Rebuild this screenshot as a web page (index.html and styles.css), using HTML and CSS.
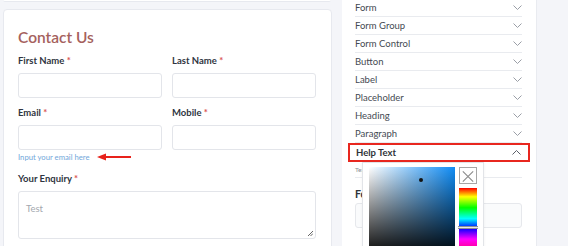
FILE: index.html
```html
<!DOCTYPE html>
<html>
<head>
<meta charset="utf-8">
<link rel="stylesheet" href="styles.css">
</head>
<body>
<div class="page">
  <div class="left">
    <div class="prev-card"></div>
    <div class="card">
      <h1 class="title">Contact Us</h1>
      <div class="grid">
        <div class="field">
          <label class="label">First Name <span class="req">*</span></label>
          <div class="input"></div>
        </div>
        <div class="field">
          <label class="label">Last Name <span class="req">*</span></label>
          <div class="input"></div>
        </div>
        <div class="field">
          <label class="label">Email <span class="req">*</span></label>
          <div class="input"></div>
          <div class="help-row">
            <span class="help">Input your email here</span>
            <svg class="arrow" width="34" height="8" viewBox="0 0 34 8"><path d="M7 4H34" stroke="#e8221b" stroke-width="2"/><path d="M0 4L9 0.5V7.5Z" fill="#e8221b"/></svg>
          </div>
        </div>
        <div class="field">
          <label class="label">Mobile <span class="req">*</span></label>
          <div class="input"></div>
        </div>
        <div class="field wide">
          <label class="label">Your Enquiry <span class="req">*</span></label>
          <div class="textarea"><span class="ph">Test</span>
            <svg class="grip" width="6" height="6" viewBox="0 0 6 6"><path d="M1 6L6 1M3.5 6L6 3.5" stroke="#666" stroke-width="1"/></svg>
          </div>
        </div>
      </div>
    </div>
  </div>
  <div class="panel">
    <ul class="acc">
      <li class="row"><span>Form</span><svg class="chev" width="9" height="5" viewBox="0 0 9 5"><path d="M0.5 0.5L4.5 4.5L8.5 0.5" fill="none" stroke="#9a9ea6" stroke-width="1"/></svg></li>
      <li class="row"><span>Form Group</span><svg class="chev" width="9" height="5" viewBox="0 0 9 5"><path d="M0.5 0.5L4.5 4.5L8.5 0.5" fill="none" stroke="#9a9ea6" stroke-width="1"/></svg></li>
      <li class="row"><span>Form Control</span><svg class="chev" width="9" height="5" viewBox="0 0 9 5"><path d="M0.5 0.5L4.5 4.5L8.5 0.5" fill="none" stroke="#9a9ea6" stroke-width="1"/></svg></li>
      <li class="row"><span>Button</span><svg class="chev" width="9" height="5" viewBox="0 0 9 5"><path d="M0.5 0.5L4.5 4.5L8.5 0.5" fill="none" stroke="#9a9ea6" stroke-width="1"/></svg></li>
      <li class="row"><span>Label</span><svg class="chev" width="9" height="5" viewBox="0 0 9 5"><path d="M0.5 0.5L4.5 4.5L8.5 0.5" fill="none" stroke="#9a9ea6" stroke-width="1"/></svg></li>
      <li class="row"><span>Placeholder</span><svg class="chev" width="9" height="5" viewBox="0 0 9 5"><path d="M0.5 0.5L4.5 4.5L8.5 0.5" fill="none" stroke="#9a9ea6" stroke-width="1"/></svg></li>
      <li class="row"><span>Heading</span><svg class="chev" width="9" height="5" viewBox="0 0 9 5"><path d="M0.5 0.5L4.5 4.5L8.5 0.5" fill="none" stroke="#9a9ea6" stroke-width="1"/></svg></li>
      <li class="row"><span>Paragraph</span><svg class="chev" width="9" height="5" viewBox="0 0 9 5"><path d="M0.5 0.5L4.5 4.5L8.5 0.5" fill="none" stroke="#9a9ea6" stroke-width="1"/></svg></li>
      <li class="row open"><span>Help Text</span><svg class="chev" width="9" height="5" viewBox="0 0 9 5"><path d="M0.5 4.5L4.5 0.5L8.5 4.5" fill="none" stroke="#5a5f68" stroke-width="1"/></svg></li>
    </ul>
    <div class="sub">
      <div class="sub-label">Text Color</div>
      <div class="sub-title">Font Size</div>
      <div class="sub-input"></div>
    </div>
    <div class="picker">
      <div class="sat"><span class="dot"></span></div>
      <div class="side">
        <div class="close"><svg width="17" height="17" viewBox="0 0 17 17"><path d="M3 3L14 14M14 3L3 14" stroke="#8c8c8c" stroke-width="1.2"/></svg></div>
        <div class="hue"><span class="hue-mark"></span></div>
      </div>
    </div>
  </div>
</div>
</body>
</html>
```

FILE: styles.css
```css
* { box-sizing: border-box; }
html, body { margin: 0; padding: 0; }
body {
  background: #f4f5f9;
  font-family: Lato, "Open Sans", sans-serif;
  width: 568px;
  height: 246px;
  overflow: hidden;
}
.page {
  display: flex;
  align-items: flex-start;
}
.left {
  width: 332px;
  padding-left: 3px;
}
.prev-card {
  height: 2px;
  background: #fff;
  border-bottom: 1px solid #e7e9ef;
  border-radius: 0 0 3px 3px;
  margin-right: 1px;
}
.card {
  margin-top: 7px;
  background: #fff;
  border: 1px solid #e7e9ef;
  border-radius: 4px;
  padding: 17px 15px 0 14px;
  height: 260px;
}
.title {
  margin: 0;
  font-size: 15.5px;
  line-height: 21px;
  font-weight: 600;
  color: #a5615d;
}
.grid {
  display: grid;
  grid-template-columns: 144px 144px;
  column-gap: 10px;
  margin-top: 6px;
}
.field.wide { grid-column: 1 / 3; }
.label {
  display: block;
  font-size: 9.5px;
  line-height: 14px;
  font-weight: 700;
  color: #2f3541;
  margin-bottom: 5px;
}
.req { color: #d9534f; }
.input {
  height: 25px;
  border: 1px solid #e3e5ea;
  border-radius: 3px;
  background: #fff;
  margin-bottom: 8px;
}
.help-row {
  display: flex;
  align-items: center;
  margin-top: -8px;
  height: 14px;
  margin-bottom: 8px;
}
.help {
  font-size: 7.7px;
  color: #72a7da;
}
.arrow { margin-left: 7px; }
.textarea {
  position: relative;
  height: 48px;
  border: 1px solid #e3e5ea;
  border-radius: 3px;
  padding: 4px 7px;
}
.ph {
  font-size: 9.5px;
  color: #a3a7ae;
}
.grip { position: absolute; right: 2px; bottom: 2px; }

.panel {
  position: relative;
  margin-left: 10px;
  width: 195px;
  height: 246px;
  background: #fff;
  border-right: 1px solid #e9ebf0;
  padding: 0 14px 0 13px;
}
.acc {
  list-style: none;
  margin: 0;
  padding: 0;
}
.row {
  display: flex;
  justify-content: space-between;
  align-items: center;
  height: 18px;
  border-bottom: 1px solid #e9ebef;
  font-size: 9.5px;
  color: #454a52;
}
.row:first-child { height: 18px; margin-top: -1px; }
.row.open {
  margin: 0 -8px 0 -7px;
  height: 19px;
  border: 2px solid #e8271f;
  padding: 0 7px 0 6px;
  font-weight: 700;
  color: #2f333a;
  font-size: 9.5px;
}
.sub { padding-top: 4px; }
.sub-label {
  font-size: 6.5px;
  color: #8b9098;
  height: 12px;
  border-bottom: 1px solid #e9ebef;
}
.sub-title {
  margin-top: 10px;
  font-size: 10.5px;
  font-weight: 700;
  color: #2f333a;
}
.sub-input {
  margin-top: 3px;
  height: 25px;
  border: 1px solid #e6e8ec;
  border-radius: 3px;
  background: #fafbfc;
}
.picker {
  position: absolute;
  left: 20px;
  top: 162px;
  width: 122px;
  height: 100px;
  background: #fff;
  border: 1px solid #e2e4e8;
  box-shadow: 0 1px 3px rgba(0,0,0,0.06);
  padding: 4px 6px 0 6px;
  display: flex;
  gap: 4px;
  z-index: 2;
}
.sat {
  position: relative;
  width: 87px;
  height: 90px;
  background:
    linear-gradient(to top, #000, rgba(0,0,0,0)),
    linear-gradient(to right, #fff, #0f8cf5);
}
.dot {
  position: absolute;
  left: 50px;
  top: 11px;
  width: 4px;
  height: 4px;
  border-radius: 50%;
  background: #111;
}
.side {
  width: 18px;
  display: flex;
  flex-direction: column;
  gap: 4px;
}
.close {
  width: 18px;
  height: 17px;
  border: 1px solid #a6a6a6;
  display: flex;
}
.hue {
  position: relative;
  height: 80px;
  background: linear-gradient(to bottom, #ff0000 0%, #ff8000 6%, #ffff00 12%, #00ff00 27%, #00ffff 42%, #0000ff 55%, #ff00ff 70%, #ff0000 100%);
}
.hue-mark {
  position: absolute;
  left: -1px;
  right: -1px;
  top: 38px;
  height: 3px;
  background: #e8e8ea;
  border: 1px solid #8d9096;
  border-width: 1px 0;
}
```
